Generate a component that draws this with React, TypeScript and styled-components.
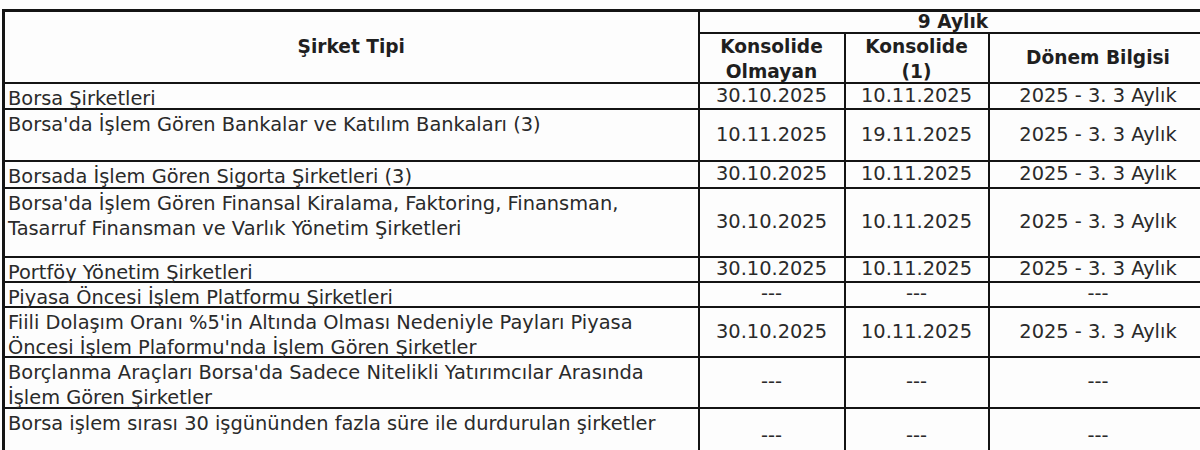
import React from 'react'
import styled, { createGlobalStyle } from 'styled-components'

type Row = {
  name: string[]
  values: [string, string, string]
  height: number
}

const rows: Row[] = [
  { name: ['Borsa Şirketleri'], values: ['30.10.2025', '10.11.2025', '2025 - 3. 3 Aylık'], height: 26 },
  { name: ["Borsa'da İşlem Gören Bankalar ve Katılım Bankaları (3)"], values: ['10.11.2025', '19.11.2025', '2025 - 3. 3 Aylık'], height: 52 },
  { name: ['Borsada İşlem Gören Sigorta Şirketleri (3)'], values: ['30.10.2025', '10.11.2025', '2025 - 3. 3 Aylık'], height: 27 },
  {
    name: ["Borsa'da İşlem Gören Finansal Kiralama, Faktoring, Finansman,", 'Tasarruf Finansman ve Varlık Yönetim Şirketleri'],
    values: ['30.10.2025', '10.11.2025', '2025 - 3. 3 Aylık'],
    height: 69,
  },
  { name: ['Portföy Yönetim Şirketleri'], values: ['30.10.2025', '10.11.2025', '2025 - 3. 3 Aylık'], height: 25 },
  { name: ['Piyasa Öncesi İşlem Platformu Şirketleri'], values: ['---', '---', '---'], height: 25 },
  {
    name: ["Fiili Dolaşım Oranı %5'in Altında Olması Nedeniyle Payları Piyasa", "Öncesi İşlem Plaformu'nda İşlem Gören Şirketler"],
    values: ['30.10.2025', '10.11.2025', '2025 - 3. 3 Aylık'],
    height: 50,
  },
  {
    name: ["Borçlanma Araçları Borsa'da Sadece Nitelikli Yatırımcılar Arasında", 'İşlem Gören Şirketler'],
    values: ['---', '---', '---'],
    height: 51,
  },
  { name: ['Borsa işlem sırası 30 işgününden fazla süre ile durdurulan şirketler'], values: ['---', '---', '---'], height: 56 },
]

const GlobalStyle = createGlobalStyle`
  html, body {
    margin: 0;
    padding: 0;
    background: #fdfdfd;
  }
  body {
    font-family: "DejaVu Sans", Verdana, sans-serif;
    color: #2a2a2a;
  }
`

const Page = styled.div`
  width: 1200px;
  height: 450px;
  overflow: hidden;
  padding-top: 9px;
  padding-left: 2px;
  box-sizing: border-box;
`

const Table = styled.table`
  width: 1204px;
  border-collapse: collapse;
  table-layout: fixed;
  border-top: 3px solid #141414;
  border-left: 3px solid #141414;
  font-size: 19.4px;
`

const Col = styled.col<{ $w: number }>`
  width: ${(p) => p.$w}px;
`

const HeadRow = styled.tr<{ $h: number }>`
  height: ${(p) => p.$h}px;
`

const HeadCell = styled.th`
  border: 2px solid #141414;
  font-weight: 700;
  font-size: 18.6px;
  text-align: center;
  vertical-align: middle;
  line-height: 18px;
  padding: 0;
  color: #1f1f1f;
  white-space: nowrap;
`

const HeadLines = styled.div`
  line-height: 25px;
  margin: -3px 0 -5px;
`

const BodyRow = styled.tr<{ $h: number }>`
  height: ${(p) => p.$h}px;
`

const NameCell = styled.td`
  border: 2px solid #141414;
  text-align: left;
  vertical-align: top;
  padding: 4px 0 0 3px;
  line-height: 22px;
  white-space: nowrap;
`

const NameLines = styled.div`
  margin-bottom: -5px;
`

const NameLine = styled.div`
  & + & {
    margin-top: 3px;
  }
`

const ValueCell = styled.td`
  border: 2px solid #141414;
  text-align: center;
  vertical-align: middle;
  padding: 0;
  line-height: 20px;
  white-space: nowrap;
`

export default function App() {
  return (
    <>
      <GlobalStyle />
      <Page>
        <Table>
          <colgroup>
            <Col $w={695} />
            <Col $w={146} />
            <Col $w={144} />
            <Col $w={219} />
          </colgroup>
          <thead>
            <HeadRow $h={22}>
              <HeadCell rowSpan={2}>Şirket Tipi</HeadCell>
              <HeadCell colSpan={3}>9 Aylık</HeadCell>
            </HeadRow>
            <HeadRow $h={50}>
              <HeadCell>
                <HeadLines>
                  Konsolide
                  <br />
                  Olmayan
                </HeadLines>
              </HeadCell>
              <HeadCell>
                <HeadLines>
                  Konsolide
                  <br />
                  (1)
                </HeadLines>
              </HeadCell>
              <HeadCell>Dönem Bilgisi</HeadCell>
            </HeadRow>
          </thead>
          <tbody>
            {rows.map((r, i) => (
              <BodyRow key={i} $h={r.height}>
                <NameCell>
                  <NameLines>
                    {r.name.map((n, j) => (
                      <NameLine key={j}>{n}</NameLine>
                    ))}
                  </NameLines>
                </NameCell>
                {r.values.map((v, j) => (
                  <ValueCell key={j}>{v}</ValueCell>
                ))}
              </BodyRow>
            ))}
          </tbody>
        </Table>
      </Page>
    </>
  )
}
